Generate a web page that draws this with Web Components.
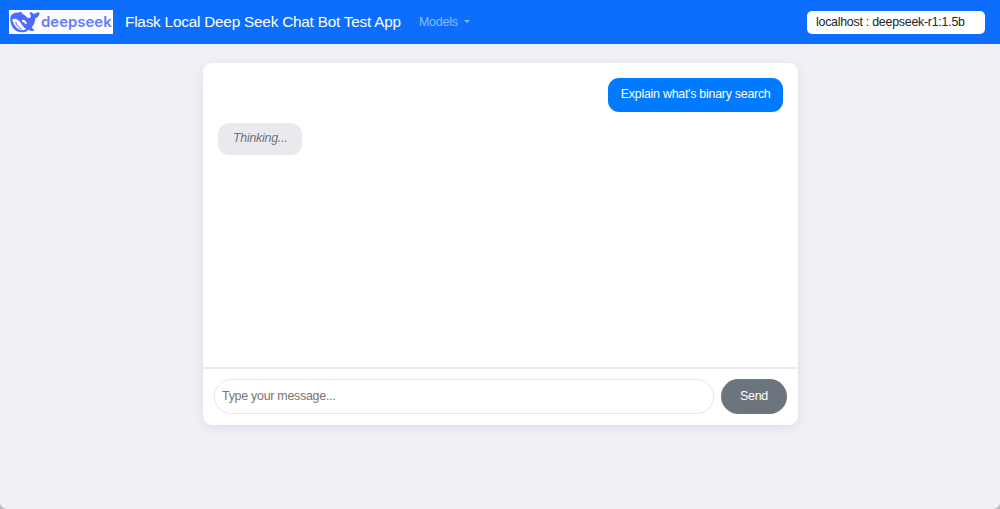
<!DOCTYPE html>
<html lang="en">
<head>
<meta charset="utf-8">
<title>Flask Local Deep Seek Chat Bot Test App</title>
<style>
html,body{margin:0;height:100%;overflow:hidden;background:#b9babd}
body{font:12.4px/18px "Liberation Sans",Arial,sans-serif;letter-spacing:-.25px;color:#212529}
</style>
</head>
<body>
<chat-app></chat-app>
<script>
const define = (name, html) => customElements.define(name, class extends HTMLElement {
  constructor() {
    super();
    this.attachShadow({ mode: 'open' }).innerHTML = html;
  }
});

define('deepseek-logo', `
<style>:host{display:block;width:104px;height:24px;background:#fdfdff;letter-spacing:0}svg{display:block}</style>
<svg width="104" height="24" viewBox="27 31 312 72">
  <path fill="#4d6bfe" d="M31 60C29 45 43 36 57 39C60 34 64 37 67 42C74 45 79 51 84 55C91 56 94 52 92 46C88 42 89 37 93 36C98 42 102 42 105 42C108 39 114 38 119 39C118 49 113 54 106 56C105 68 102 77 95 83L101 90C104 92 102 94 99 94C93 94 89 92 85 90C80 97 70 99 60 97C42 95 32 79 31 60Z"/>
  <path fill="#fdfdff" d="M37 59C46 54 55 60 62 69C67 78 72 84 79 88C70 94 58 92 50 84C42 76 38 68 37 59Z"/>
  <path fill="#fdfdff" d="M66 62C71 57 78 63 81 72L76 73C73 68 70 66 66 67Z"/>
  <path fill="none" stroke="#4d6bfe" stroke-width="3" d="M47 67C49 77 56 84 65 88"/>
  <text x="123" y="82" font-family="Inter" font-weight="600" font-size="43" textLength="212" lengthAdjust="spacingAndGlyphs" fill="#637dfc">deepseek</text>
</svg>`);

define('nav-bar', `
<style>
:host{display:flex;align-items:center;box-sizing:border-box;height:44px;padding:0 15px 0 9px;background:#0d6efd}
.title{margin:0 0 0 12px;color:#fff;font-size:15.3px;letter-spacing:-.2px;white-space:nowrap}
.models{display:flex;align-items:center;gap:6px;margin:-1px 0 0 18px;color:#8cbbfe;letter-spacing:-.2px}
.caret{border:3px solid transparent;border-top-color:currentColor;border-bottom:0}
.host{box-sizing:border-box;width:178px;height:23px;margin-left:auto;padding:0 9px;border-radius:5px;background:#fff;line-height:22px}
</style>
<deepseek-logo></deepseek-logo><div class="title"><slot name="title"></slot></div>
<div class="models"><span>Models</span><i class="caret"></i></div>
<div class="host"><slot name="model"></slot></div>`);

define('chat-message', `
<style>
:host{display:block;box-sizing:border-box;align-self:flex-start;padding:6px 15px;border-radius:11px;background:#e9eaee;color:#6c757d;font-style:italic;height:32px}
:host([user]){align-self:flex-end;padding:7px 12.5px;height:34px;background:#007bff;color:#fff;font-style:normal}
</style><slot></slot>`);

define('message-form', `
<style>
:host{display:flex;gap:7px;box-sizing:border-box;height:58px;padding:10px 11px 12px;border-top:2px solid #e9eaef}
.field{flex:1;box-sizing:border-box;height:35px;border:1.5px solid #e6e7ed;border-radius:18px;padding:0 7px;line-height:32px;color:#757575}
button{width:66px;height:35px;border:0;border-radius:18px;background:#6c757d;color:#fff;font:inherit;letter-spacing:inherit;padding:0 0 1px}
</style>
<div class="field">Type your message...</div><button>Send</button>`);

define('chat-panel', `
<style>
:host{display:flex;flex-direction:column;width:595px;height:362px;margin:19px auto 0 203px;border-radius:9px;background:#fff;box-shadow:0 3px 12px rgba(0,0,0,.08)}
.log{flex:1;display:flex;flex-direction:column;gap:11px;padding:15px}
</style>
<div class="log"><slot></slot></div><message-form></message-form>`);

define('chat-app', `
<style>:host{display:flow-root;height:509px;background:#f0f1f6;border-radius:0 0 7px 7px;overflow:hidden}</style>
<nav-bar><span slot="title">Flask Local Deep Seek Chat Bot Test App</span><span slot="model">localhost : deepseek-r1:1.5b</span></nav-bar>
<chat-panel><chat-message user>Explain what's binary search</chat-message><chat-message>Thinking...</chat-message></chat-panel>`);
</script>
</body>
</html>
